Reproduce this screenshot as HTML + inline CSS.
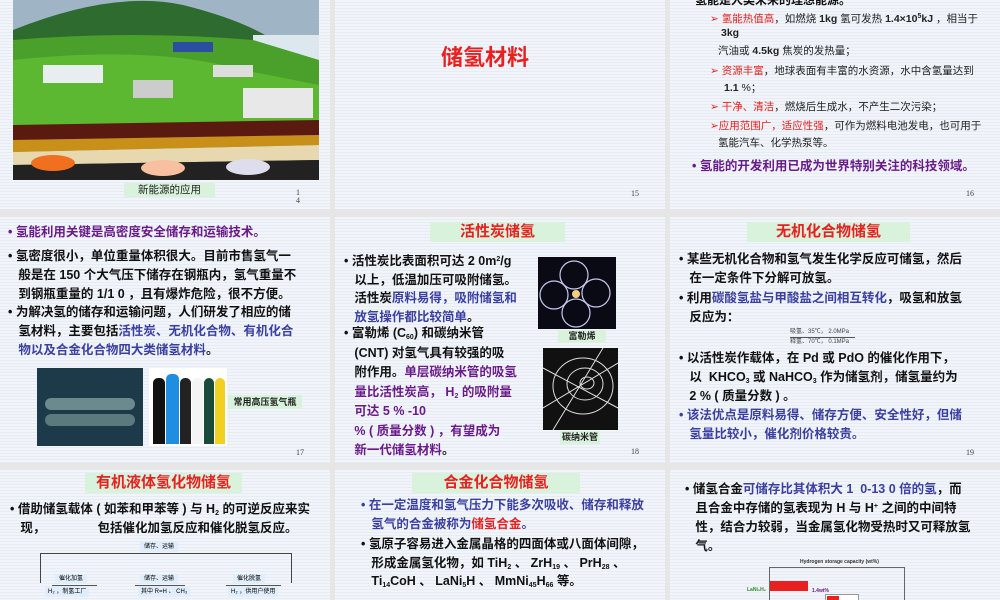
<!DOCTYPE html>
<html><head><meta charset="utf-8"><style>
*{margin:0;padding:0;box-sizing:border-box}
body{width:1000px;height:600px;overflow:hidden;background:#e6e6e6;position:relative;font-family:"Liberation Sans","Noto Sans CJK SC",sans-serif}
.s{position:absolute;background:repeating-linear-gradient(180deg,#f1f4f9 0,#f1f4f9 2px,#e6ecf5 2px,#e6ecf5 3px);overflow:hidden}
.a{position:absolute;white-space:nowrap}
.b{font-weight:bold;color:#111;font-size:12.5px}
.p{color:#6a1b8a}.bl{color:#3b3fa0}.r{color:#e8201f}
.n{font-family:"Liberation Serif",serif;font-size:8px;color:#444}
.tt{position:absolute;background:#d9f2dc;color:#e8201f;font-weight:bold;font-size:15px;text-align:center;line-height:20px}
.cap{position:absolute;background:#d9f2dc;font-size:9px;text-align:center;color:#222}
sub{font-size:7px;line-height:0;vertical-align:-2px}
sup{font-size:7px;line-height:0;vertical-align:4px}
</style></head><body>

<!-- slide 14 -->
<div class="s" style="left:0;top:0;width:330px;height:209px">
 <svg class="a" style="left:13px;top:0" width="306" height="180" viewBox="0 0 306 180">
  <rect width="306" height="180" fill="#9fb4c4"/>
  <path d="M0 30 Q100 -10 170 5 Q230 20 260 40 L306 40 L306 180 L0 180Z" fill="#2e6b2e"/>
  <rect x="240" y="35" width="66" height="50" fill="#dde8ee"/>
  <path d="M0 40 Q120 30 240 40 L306 60 L306 125 L0 125Z" fill="#4aa02a"/>
  <path d="M0 60 Q140 45 230 70 L306 85 L306 125 L0 125Z" fill="#5cb830"/>
  <rect x="30" y="65" width="60" height="18" fill="#e8eef0"/>
  <rect x="120" y="80" width="40" height="18" fill="#ccc"/>
  <rect x="230" y="88" width="70" height="30" fill="#e8e8e8"/>
  <rect x="200" y="65" width="40" height="12" fill="#ddd"/>
  <rect x="160" y="42" width="40" height="10" fill="#2a4fa0"/>
  <path d="M0 125 L306 120 L306 135 L0 140Z" fill="#5a1a10"/>
  <path d="M0 140 L306 135 L306 145 L0 152Z" fill="#c89018"/>
  <path d="M0 152 L306 145 L306 160 L0 165Z" fill="#e8d8b0"/>
  <path d="M0 165 L306 160 L306 180 L0 180Z" fill="#222"/>
  <ellipse cx="40" cy="163" rx="22" ry="8" fill="#f07020"/>
  <ellipse cx="150" cy="168" rx="22" ry="8" fill="#f8c0a0"/>
  <ellipse cx="235" cy="167" rx="22" ry="8" fill="#dde"/>
 </svg>
 <div class="cap" style="left:124px;top:183px;width:91px;height:14px;font-size:10.5px;line-height:14px">新能源的应用</div>
 <div class="a n" style="left:296px;top:189px;line-height:8px">1<br>4</div>
</div>

<!-- slide 15 -->
<div class="s" style="left:335px;top:0;width:330px;height:209px">
 <div class="a r" style="left:106px;top:40px;font-size:22px;font-weight:bold">储氢材料</div>
 <div class="a n" style="left:296px;top:189px">15</div>
</div>

<!-- slide 16 -->
<div class="s" style="left:670px;top:0;width:330px;height:209px;font-size:10.5px;color:#222">
 <div class="a b" style="left:25px;top:-9px;font-size:12px">氢能是人类未来的理想能源。</div>
 <div class="a" style="left:40px;top:11px"><span class="r">➢ 氢能热值高</span>，如燃烧 <b>1kg</b> 氢可发热 <b>1.4×10<sup>5</sup>kJ</b> ，相当于</div>
 <div class="a" style="left:51px;top:27px"><b>3kg</b></div>
 <div class="a" style="left:48px;top:43px">汽油或 <b>4.5kg</b> 焦炭的发热量；</div>
 <div class="a" style="left:40px;top:63px"><span class="r">➢ 资源丰富</span>，地球表面有丰富的水资源，水中含氢量达到</div>
 <div class="a" style="left:54px;top:80px"><b>1.1</b> %；</div>
 <div class="a" style="left:40px;top:99px"><span class="r">➢ 干净、清洁</span>，燃烧后生成水，不产生二次污染；</div>
 <div class="a" style="left:40px;top:118px"><span class="r">➢应用范围广，适应性强</span>，可作为燃料电池发电，也可用于</div>
 <div class="a" style="left:48px;top:135px">氢能汽车、化学热泵等。</div>
 <div class="a b p" style="left:22px;top:155px;font-size:12.5px">• 氢能的开发利用已成为世界特别关注的科技领域。</div>
 <div class="a n" style="left:296px;top:189px">16</div>
</div>

<!-- slide 17 -->
<div class="s" style="left:0;top:217px;width:330px;height:246px;line-height:19px">
 <div class="a b p" style="left:8px;top:6px">• 氢能利用关键是高密度安全储存和运输技术。</div>
 <div class="a b" style="left:8px;top:30px">• 氢密度很小，单位重量体积很大。目前市售氢气一<br>&nbsp;&nbsp;&nbsp;般是在 150 个大气压下储存在钢瓶内，氢气重量不<br>&nbsp;&nbsp;&nbsp;到钢瓶重量的 1/1 0 ，且有爆炸危险，很不方便。</div>
 <div class="a b" style="left:8px;top:86px">• 为解决氢的储存和运输问题，人们研发了相应的储<br>&nbsp;&nbsp;&nbsp;氢材料，主要包括<span class="bl">活性炭、无机化合物、有机化合</span><br>&nbsp;&nbsp;&nbsp;<span class="bl">物以及合金化合物四大类储氢材料</span>。</div>
 <div class="a" style="left:37px;top:151px;width:106px;height:78px;background:#1c3a4a"><div style="position:absolute;left:8px;top:30px;width:90px;height:12px;border-radius:6px;background:#6a8a8e"></div><div style="position:absolute;left:8px;top:46px;width:90px;height:12px;border-radius:6px;background:#5a7a7e"></div></div>
 <div class="a" style="left:149px;top:151px;width:78px;height:78px;background:#fff">
  <div style="position:absolute;left:4px;top:10px;width:12px;height:66px;background:#111;border-radius:5px 5px 0 0"></div>
  <div style="position:absolute;left:17px;top:6px;width:13px;height:70px;background:#1f8de0;border-radius:5px 5px 0 0"></div>
  <div style="position:absolute;left:31px;top:10px;width:11px;height:66px;background:#222;border-radius:5px 5px 0 0"></div>
  <div style="position:absolute;left:43px;top:10px;width:11px;height:66px;background:#f4f4f4;border-radius:5px 5px 0 0"></div>
  <div style="position:absolute;left:55px;top:10px;width:10px;height:66px;background:#1a4a3a;border-radius:5px 5px 0 0"></div>
  <div style="position:absolute;left:66px;top:10px;width:10px;height:66px;background:#f0d020;border-radius:5px 5px 0 0"></div>
 </div>
 <div class="cap" style="left:228px;top:178px;width:74px;height:14px;line-height:14px;font-weight:bold">常用高压氢气瓶</div>
 <div class="a n" style="left:296px;top:226px">17</div>
</div>

<!-- slide 18 -->
<div class="s" style="left:335px;top:217px;width:330px;height:246px;line-height:18.5px">
 <div class="tt" style="left:95px;top:5px;width:135px">活性炭储氢</div>
 <div class="a b" style="left:9px;top:35px">• 活性炭比表面积可达 2 0m<sup>2</sup>/g<br>&nbsp;&nbsp;&nbsp;以上，低温加压可吸附储氢。<br>&nbsp;&nbsp;&nbsp;活性炭<span class="bl">原料易得，吸附储氢和</span><br>&nbsp;&nbsp;&nbsp;<span class="bl">放氢操作都比较简单</span>。</div>
 <div class="a b" style="left:9px;top:107px;line-height:19.5px">• 富勒烯 (C<sub>60</sub>) 和碳纳米管<br>&nbsp;&nbsp;&nbsp;(CNT) 对氢气具有较强的吸<br>&nbsp;&nbsp;&nbsp;附作用。<span class="p">单层碳纳米管的吸氢</span><br>&nbsp;&nbsp;&nbsp;<span class="p">量比活性炭高， H<sub>2</sub> 的吸附量</span><br>&nbsp;&nbsp;&nbsp;<span class="p">可达 5 % -10</span><br>&nbsp;&nbsp;&nbsp;<span class="p">% ( 质量分数 ) ，有望成为</span><br>&nbsp;&nbsp;&nbsp;<span class="p">新一代储氢材料</span>。</div>
 <svg class="a" style="left:203px;top:40px" width="78" height="72"><rect width="78" height="72" fill="#0a0a14"/><g fill="none" stroke="#c8c8f0" stroke-width="1.2"><circle cx="36" cy="18" r="14"/><circle cx="16" cy="38" r="14"/><circle cx="58" cy="36" r="14"/><circle cx="38" cy="56" r="14"/></g><circle cx="38" cy="37" r="4" fill="#f0d080"/></svg>
 <div class="cap" style="left:223px;top:113px;width:48px;height:13px;line-height:13px;font-weight:bold">富勒烯</div>
 <svg class="a" style="left:208px;top:131px" width="75" height="82"><rect width="75" height="82" fill="#111"/><g fill="none" stroke="#ddd" stroke-width="1"><ellipse cx="40" cy="38" rx="30" ry="28"/><ellipse cx="42" cy="36" rx="18" ry="16"/><ellipse cx="44" cy="35" rx="7" ry="6"/><path d="M0 20 L75 60 M0 60 L75 15 M10 82 L60 0"/></g></svg>
 <div class="cap" style="left:225px;top:214px;width:40px;height:13px;line-height:13px;font-weight:bold">碳纳米管</div>
 <div class="a n" style="left:296px;top:226px">18</div>
</div>

<!-- slide 19 -->
<div class="s" style="left:670px;top:217px;width:330px;height:246px;line-height:19px">
 <div class="tt" style="left:77px;top:5px;width:163px">无机化合物储氢</div>
 <div class="a b" style="left:9px;top:33px">• 某些无机化合物和氢气发生化学反应可储氢，然后<br>&nbsp;&nbsp;&nbsp;在一定条件下分解可放氢。</div>
 <div class="a b" style="left:9px;top:72px">• 利用<span class="bl">碳酸氢盐与甲酸盐之间相互转化</span>，吸氢和放氢<br>&nbsp;&nbsp;&nbsp;反应为：</div>
 <div class="a" style="left:120px;top:110px;font-size:6px;color:#444;line-height:10px">吸氢、35℃， 2.0MPa<br>释氢、70℃， 0.1MPa</div>
 <div class="a" style="left:120px;top:120px;width:65px;border-top:1px solid #555"></div>
 <div class="a b" style="left:9px;top:132px">• 以活性炭作载体，在 Pd 或 PdO 的催化作用下，<br>&nbsp;&nbsp;&nbsp;以 &nbsp;KHCO<sub>3</sub> 或 NaHCO<sub>3</sub> 作为储氢剂，储氢量约为<br>&nbsp;&nbsp;&nbsp;2 % ( 质量分数 ) 。</div>
 <div class="a b bl" style="left:9px;top:189px">• 该法优点是原料易得、储存方便、安全性好，但储<br>&nbsp;&nbsp;&nbsp;氢量比较小，催化剂价格较贵。</div>
 <div class="a n" style="left:296px;top:226px">19</div>
</div>

<!-- slide 20 -->
<div class="s" style="left:0;top:470px;width:330px;height:130px;line-height:19px">
 <div class="tt" style="left:85px;top:3px;width:157px">有机液体氢化物储氢</div>
 <div class="a b" style="left:10px;top:30px">• 借助储氢载体 ( 如苯和甲苯等 ) 与 H<sub>2</sub> 的可逆反应来实<br>&nbsp;&nbsp;&nbsp;现， &nbsp;&nbsp;&nbsp;&nbsp;&nbsp;&nbsp;&nbsp;&nbsp;&nbsp;&nbsp;&nbsp;&nbsp;&nbsp;&nbsp;包括催化加氢反应和催化脱氢反应。</div>
 <div class="a" style="left:140px;top:72px;font-size:6px;background:#dfeefa;padding:0 4px;line-height:10px">储存、运输</div>
 <div class="a" style="left:40px;top:83px;width:252px;height:30px;border:1px solid #444;border-bottom:none"></div>
 <div class="a" style="left:55px;top:104px;font-size:6px;background:#dfeefa;padding:0 4px;line-height:10px">催化加氢</div>
 <div class="a" style="left:140px;top:104px;font-size:6px;background:#dfeefa;padding:0 4px;line-height:10px">储存、运输</div>
 <div class="a" style="left:233px;top:104px;font-size:6px;background:#dfeefa;padding:0 4px;line-height:10px">催化脱氢</div>
 <div class="a" style="left:52px;top:115px;width:45px;border-top:1px solid #555"></div>
 <div class="a" style="left:135px;top:115px;width:50px;border-top:1px solid #555"></div>
 <div class="a" style="left:226px;top:115px;width:55px;border-top:1px solid #555"></div>
 <div class="a" style="left:45px;top:117px;font-size:6px;background:#dfeefa;padding:0 3px;line-height:10px">H₂ ，制氢工厂</div>
 <div class="a" style="left:138px;top:117px;font-size:6px;background:#dfeefa;padding:0 3px;line-height:10px">其中 R=H 、 CH₃</div>
 <div class="a" style="left:228px;top:117px;font-size:6px;background:#dfeefa;padding:0 3px;line-height:10px">H₂ ，供用户使用</div>
</div>

<!-- slide 21 -->
<div class="s" style="left:335px;top:470px;width:330px;height:130px;line-height:18.5px">
 <div class="tt" style="left:77px;top:3px;width:168px">合金化合物储氢</div>
 <div class="a b bl" style="left:26px;top:26px">• 在一定温度和氢气压力下能多次吸收、储存和释放<br>&nbsp;&nbsp;&nbsp;氢气的合金被称为<span class="r">储氢合金</span>。</div>
 <div class="a b" style="left:26px;top:65px">• 氢原子容易进入金属晶格的四面体或八面体间隙，<br>&nbsp;&nbsp;&nbsp;形成金属氢化物，如 TiH<sub>2</sub> 、 ZrH<sub>19</sub> 、 PrH<sub>28</sub> 、<br>&nbsp;&nbsp;&nbsp;Ti<sub>14</sub>CoH 、 LaNi<sub>5</sub>H 、 MmNi<sub>45</sub>H<sub>66</sub> 等。</div>
</div>

<!-- slide 22 -->
<div class="s" style="left:670px;top:470px;width:330px;height:130px;line-height:19px">
 <div class="a b" style="left:15px;top:10px">• 储氢合金<span class="bl">可储存比其体积大 1 &nbsp;0-13 0 倍的氢</span>，而<br>&nbsp;&nbsp;&nbsp;且合金中存储的氢表现为 H 与 H<sup>+</sup> 之间的中间特<br>&nbsp;&nbsp;&nbsp;性，结合力较弱，当金属氢化物受热时又可释放氢<br>&nbsp;&nbsp;&nbsp;气。</div>
 <div class="a" style="left:130px;top:83px;font-size:5px;font-weight:bold;color:#333">Hydrogen storage capacity (wt%)</div>
 <div class="a" style="left:99px;top:97px;width:136px;height:40px;border-left:1px solid #666;border-right:1px solid #666;border-top:1px solid #666"></div>
 <div class="a" style="left:100px;top:111px;width:38px;height:10px;background:#e8201f"></div>
 <div class="a" style="left:77px;top:111px;font-size:5px;color:#2a8a2a;font-weight:bold">LaNi₅H₆</div>
 <div class="a" style="left:142px;top:112px;font-size:5px;color:#6a1b8a;font-weight:bold">1.4wt%</div>
 <div class="a" style="left:155px;top:124px;width:34px;height:8px;background:#fff;border:1px solid #999"><div style="width:12px;height:4px;background:#e8201f;margin:1px"></div></div>
</div>
</body></html>
